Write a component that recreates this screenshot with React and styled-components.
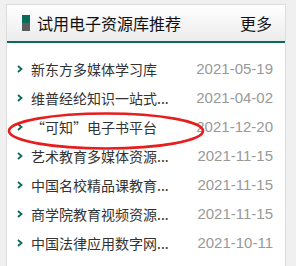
import React from 'react';
import styled, { createGlobalStyle } from 'styled-components';

const GlobalStyle = createGlobalStyle`
  html, body {
    margin: 0;
    padding: 0;
    background: #f0f0f0;
  }
  body {
    font-family: "Noto Sans CJK SC", "Liberation Sans", sans-serif;
  }
`;

const Page = styled.div`
  position: relative;
  width: 296px;
  height: 266px;
  padding: 4px 10px 0 6px;
  box-sizing: border-box;
  overflow: hidden;
`;

const Panel = styled.section`
  background: #fff;
  border: 1px solid #dddddd;
  border-bottom: none;
  height: 262px;
  box-sizing: border-box;
`;

const Header = styled.div`
  display: flex;
  align-items: center;
  height: 36px;
  padding: 0 13px 0 15px;
  background: linear-gradient(#ffffff, #ececec);
  border-bottom: 2px solid #0b6b5b;
`;

const Marker = styled.span`
  width: 8px;
  height: 16px;
  margin-right: 7px;
  background: linear-gradient(#0b6b5b 50%, #5c5c5c 50%);
`;

const Title = styled.h3`
  flex: 1;
  margin: 0;
  font-size: 16px;
  font-weight: normal;
  color: #111;
  line-height: 1;
`;

const More = styled.a`
  font-size: 16px;
  color: #111;
  text-decoration: none;
  line-height: 1;
`;

const List = styled.ul`
  list-style: none;
  margin: 0;
  padding: 11px 12px 0 10px;
`;

const Row = styled.li`
  display: flex;
  align-items: center;
  height: 29px;
`;

const Arrow = styled.svg`
  width: 6px;
  height: 8px;
  margin-right: 8px;
  flex: none;
`;

const Name = styled.span`
  font-size: 14px;
  color: #333;
  white-space: nowrap;
`;

const Date = styled.span`
  margin-left: auto;
  font-family: "Liberation Sans", sans-serif;
  font-size: 15px;
  color: #999;
`;

const Mark = styled.svg`
  position: absolute;
  left: 0;
  top: 0;
  pointer-events: none;
`;

const items = [
  ['新东方多媒体学习库', '2021-05-19'],
  ['维普经纶知识一站式...', '2021-04-02'],
  ['“可知”电子书平台', '2021-12-20'],
  ['艺术教育多媒体资源...', '2021-11-15'],
  ['中国名校精品课教育...', '2021-11-15'],
  ['商学院教育视频资源...', '2021-11-15'],
  ['中国法律应用数字网...', '2021-10-11'],
];

const App = () => (
  <Page>
    <GlobalStyle />
    <Panel>
      <Header>
        <Marker />
        <Title>试用电子资源库推荐</Title>
        <More href="#">更多</More>
      </Header>
      <List>
        {items.map(([name, date]) => (
          <Row key={name}>
            <Arrow viewBox="0 0 6 8">
              <polyline points="1,1 4.5,4 1,7" fill="none" stroke="#0b6b5b" strokeWidth="1.8" />
            </Arrow>
            <Name>{name}</Name>
            <Date>{date}</Date>
          </Row>
        ))}
      </List>
    </Panel>
    <Mark width="296" height="266">
      <ellipse cx="106" cy="131" rx="97" ry="17.5" fill="none" stroke="#e61e1e" strokeWidth="2.6" />
    </Mark>
  </Page>
);

export default App;
